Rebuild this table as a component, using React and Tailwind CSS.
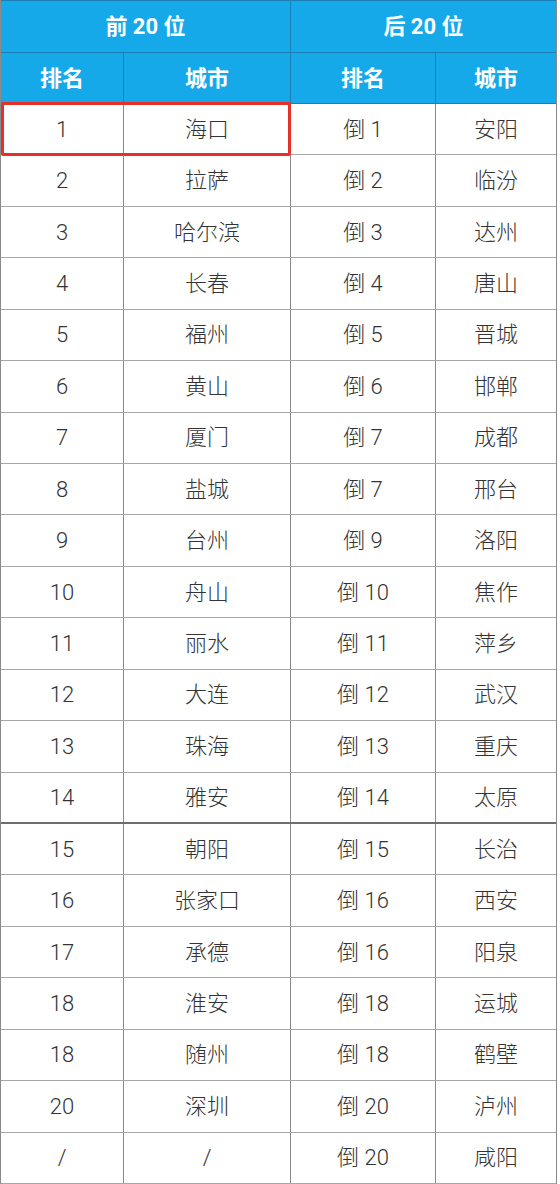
import React from 'react';

const ROWS = [
  ['1', '海口', '倒 1', '安阳'],
  ['2', '拉萨', '倒 2', '临汾'],
  ['3', '哈尔滨', '倒 3', '达州'],
  ['4', '长春', '倒 4', '唐山'],
  ['5', '福州', '倒 5', '晋城'],
  ['6', '黄山', '倒 6', '邯郸'],
  ['7', '厦门', '倒 7', '成都'],
  ['8', '盐城', '倒 7', '邢台'],
  ['9', '台州', '倒 9', '洛阳'],
  ['10', '舟山', '倒 10', '焦作'],
  ['11', '丽水', '倒 11', '萍乡'],
  ['12', '大连', '倒 12', '武汉'],
  ['13', '珠海', '倒 13', '重庆'],
  ['14', '雅安', '倒 14', '太原'],
  ['15', '朝阳', '倒 15', '长治'],
  ['16', '张家口', '倒 16', '西安'],
  ['17', '承德', '倒 16', '阳泉'],
  ['18', '淮安', '倒 18', '运城'],
  ['18', '随州', '倒 18', '鹤壁'],
  ['20', '深圳', '倒 20', '泸州'],
  ['/', '/', '倒 20', '咸阳'],
];

const font = { fontFamily: 'Roboto, "Noto Sans CJK SC", sans-serif' };

export default function App() {
  return (
    <div className="w-[560px] h-[1184px] bg-white overflow-hidden" style={font}>
      <div className="w-[557px] border-l border-r border-[#8a8a8a]">
        {/* Header: groups */}
        <div className="grid grid-cols-[290px_1fr] h-[53px] bg-[#16a9e9] border-t border-b border-[#1b7fb5] text-white font-bold text-[22px]">
          <div className="flex items-center justify-center border-r border-[#1b7fb5]">前 20 位</div>
          <div className="flex items-center justify-center">后 20 位</div>
        </div>
        {/* Header: columns */}
        <div className="grid grid-cols-[123px_167px_145px_1fr] h-[51px] bg-[#16a9e9] border-b border-[#1b7fb5] text-white font-bold text-[22px]">
          <div className="flex items-center justify-center border-r border-[#1b7fb5]">排名</div>
          <div className="flex items-center justify-center border-r border-[#1b7fb5]">城市</div>
          <div className="flex items-center justify-center border-r border-[#1b7fb5]">排名</div>
          <div className="flex items-center justify-center">城市</div>
        </div>
        {/* Body */}
        <div className="grid grid-rows-[repeat(21,1fr)] h-[1080px] text-[22px] font-light text-[#333]">
          {ROWS.map((r, i) => (
            <div
              key={i}
              className={`relative grid grid-cols-[123px_167px_145px_1fr] ${
                i === 13 ? 'border-b-2 border-[#6e6e6e]' : 'border-b border-[#a8a8a8]'
              }`}
            >
              <div className="flex items-center justify-center border-r border-[#8a8a8a]">{r[0]}</div>
              <div className="flex items-center justify-center border-r border-[#8a8a8a]">{r[1]}</div>
              <div className="flex items-center justify-center border-r border-[#8a8a8a]">{r[2]}</div>
              <div className="flex items-center justify-center">{r[3]}</div>
              {i === 0 && (
                <div className="absolute left-0 -top-[2px] w-[290px] h-[54px] border-[3px] border-[#e8302b] rounded-[2px]" />
              )}
            </div>
          ))}
        </div>
      </div>
    </div>
  );
}
